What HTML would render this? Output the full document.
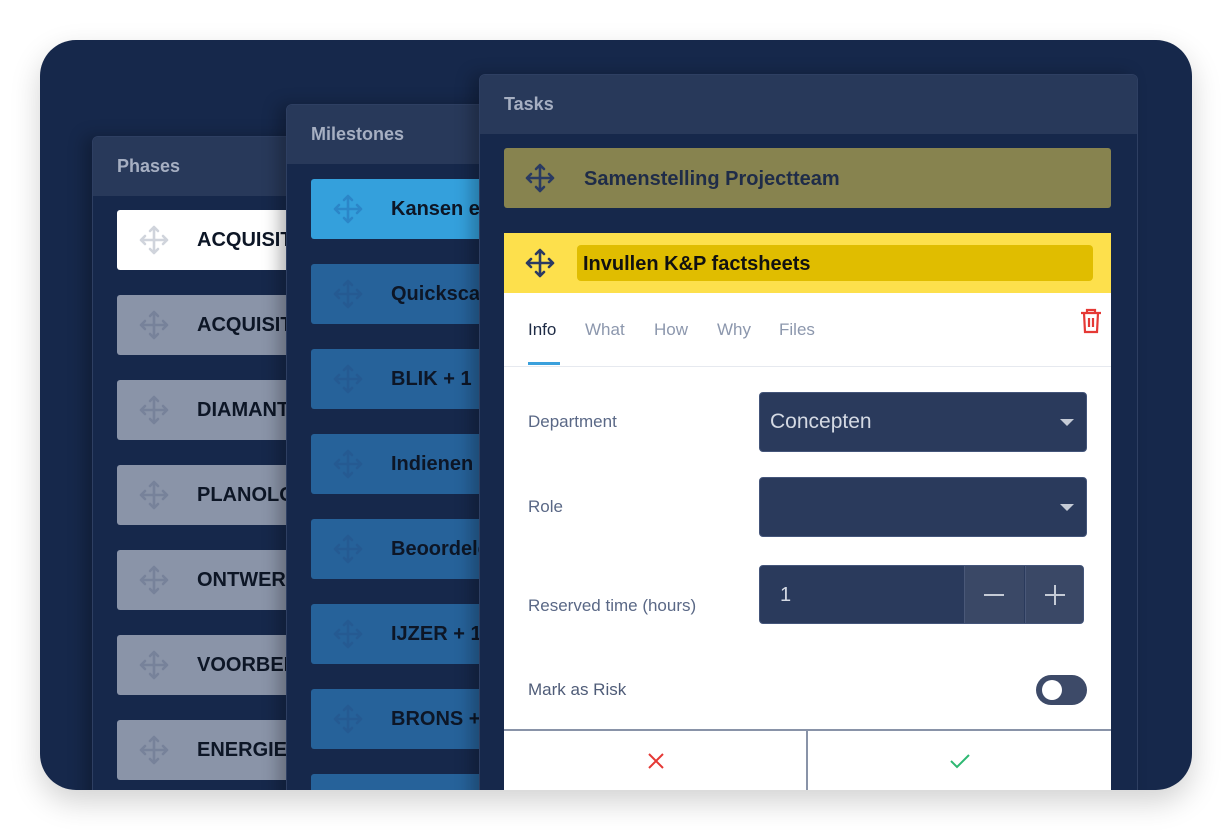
<!DOCTYPE html>
<html><head><meta charset="utf-8"><style>
*{margin:0;padding:0;box-sizing:border-box}
body{width:1232px;height:830px;background:#fff;position:relative;overflow:hidden;font-family:"Liberation Sans",Arial,sans-serif}
.frame{position:absolute;left:40px;top:40px;width:1152px;height:750px;background:#16284b;border-radius:36px;overflow:hidden;box-shadow:0 12px 30px rgba(0,0,0,.18)}
.panel{position:absolute;background:#16284b;border:1px solid #2e3f62;border-radius:6px 6px 0 0;overflow:hidden;box-shadow:-8px 0 16px rgba(0,0,0,.25)}
.ph{height:59px;background:#28395a;color:#a6afc2;font-size:18px;font-weight:bold;padding-left:24px;line-height:58px}
.it{position:absolute;height:60px;border-radius:3px;font-size:20px;font-weight:bold;color:#0d1626;line-height:60px;white-space:nowrap;overflow:hidden}
.it svg{position:absolute;left:22px;top:15px}
.it span{position:absolute;left:80px}
.lbl{position:absolute;left:528px;color:#5a6886;font-size:17px}
.sel{position:absolute;left:759px;width:328px;height:60px;background:#2a3a5c;border-radius:4px;border:1px solid #44557a}
.tri{position:absolute;right:12px;top:27px;border-left:7px solid transparent;border-right:7px solid transparent;border-top:7px solid #c5cbd6}
</style></head><body>
<svg width="0" height="0" style="position:absolute"><defs><symbol id="mv" viewBox="0 0 30 30"><g fill="none" stroke="currentColor" stroke-width="2.6" stroke-linecap="round" stroke-linejoin="round"><path d="M15 2V28M2 15H28M11 6L15 2L19 6M11 24L15 28L19 24M6 11L2 15L6 19M24 11L28 15L24 19"/></g></symbol></defs></svg>
<div class="frame">
 <div class="panel" style="left:52px;top:96px;width:260px;height:700px">
  <div class="ph">Phases</div>
 </div>
</div>
<div style="position:absolute;left:40px;top:40px;width:1152px;height:750px;border-radius:36px;overflow:hidden">
 <div style="position:absolute;left:77px;top:170px;width:200px;height:60px;background:linear-gradient(90deg,#fff 80%,#d8dbe2);" class="it"><svg width="30" height="30" style="color:#d0d4dc"><use href="#mv"/></svg><span>ACQUISITIE</span></div>
 <div class="it" style="left:77px;top:255px;width:200px;background:#8a94a8"><svg width="30" height="30" style="color:#77829a"><use href="#mv"/></svg><span>ACQUISITIE</span></div>
 <div class="it" style="left:77px;top:340px;width:200px;background:#8a94a8"><svg width="30" height="30" style="color:#77829a"><use href="#mv"/></svg><span>DIAMANT</span></div>
 <div class="it" style="left:77px;top:425px;width:200px;background:#8a94a8"><svg width="30" height="30" style="color:#77829a"><use href="#mv"/></svg><span>PLANOLOGIE</span></div>
 <div class="it" style="left:77px;top:510px;width:200px;background:#8a94a8"><svg width="30" height="30" style="color:#77829a"><use href="#mv"/></svg><span>ONTWERP</span></div>
 <div class="it" style="left:77px;top:595px;width:200px;background:#8a94a8"><svg width="30" height="30" style="color:#77829a"><use href="#mv"/></svg><span>VOORBEREIDING</span></div>
 <div class="it" style="left:77px;top:680px;width:200px;background:#8a94a8"><svg width="30" height="30" style="color:#77829a"><use href="#mv"/></svg><span>ENERGIE</span></div>

 <div class="panel" style="left:246px;top:64px;width:260px;height:720px">
  <div class="ph">Milestones</div>
  <div class="it" style="left:24px;top:74px;width:220px;background:#34a0dc"><svg width="30" height="30" style="color:#2b86c8"><use href="#mv"/></svg><span>Kansen en risico's</span></div>
  <div class="it" style="left:24px;top:159px;width:220px;background:#26629a"><svg width="30" height="30" style="color:#255a92"><use href="#mv"/></svg><span>Quickscan</span></div>
  <div class="it" style="left:24px;top:244px;width:220px;background:#26629a"><svg width="30" height="30" style="color:#255a92"><use href="#mv"/></svg><span>BLIK + 1</span></div>
  <div class="it" style="left:24px;top:329px;width:220px;background:#26629a"><svg width="30" height="30" style="color:#255a92"><use href="#mv"/></svg><span>Indienen</span></div>
  <div class="it" style="left:24px;top:414px;width:220px;background:#26629a"><svg width="30" height="30" style="color:#255a92"><use href="#mv"/></svg><span>Beoordelen</span></div>
  <div class="it" style="left:24px;top:499px;width:220px;background:#26629a"><svg width="30" height="30" style="color:#255a92"><use href="#mv"/></svg><span>IJZER + 1</span></div>
  <div class="it" style="left:24px;top:584px;width:220px;background:#26629a"><svg width="30" height="30" style="color:#255a92"><use href="#mv"/></svg><span>BRONS + 1</span></div>
  <div class="it" style="left:24px;top:669px;width:220px;background:#26629a"></div>
 </div>

 <div class="panel" style="left:439px;top:34px;width:659px;height:740px">
  <div class="ph">Tasks</div>
 </div>
</div>
<div style="position:absolute;left:0;top:0;width:1232px;height:790px;overflow:hidden">
 <div class="it" style="left:504px;top:148px;width:607px;background:#87834f;color:#1f2c48"><svg width="30" height="30" style="color:#2a3a62;left:21px"><use href="#mv"/></svg><span style="font-size:20px;top:1px">Samenstelling Projectteam</span></div>
 <div style="position:absolute;left:504px;top:233px;width:607px;height:560px;background:#fff;border-radius:3px 3px 0 0">
  <div style="height:60px;background:#fde04c;position:relative">
   <svg width="30" height="30" style="position:absolute;left:21px;top:15px;color:#2a3a62"><use href="#mv"/></svg>
   <div style="position:absolute;left:73px;top:12px;width:516px;height:36px;background:#e0bd00;border-radius:4px;font-size:20px;font-weight:bold;color:#111;line-height:38px;padding-left:6px">Invullen K&amp;P factsheets</div>
  </div>
 </div>
 <div style="position:absolute;left:528px;top:320px;font-size:17px;color:#1e2b45">Info</div>
 <div style="position:absolute;left:585px;top:320px;font-size:17px;color:#8c97ad">What</div>
 <div style="position:absolute;left:654px;top:320px;font-size:17px;color:#8c97ad">How</div>
 <div style="position:absolute;left:717px;top:320px;font-size:17px;color:#8c97ad">Why</div>
 <div style="position:absolute;left:779px;top:320px;font-size:17px;color:#8c97ad">Files</div>
 <div style="position:absolute;left:528px;top:362px;width:32px;height:3px;background:#3aa0dc"></div>
 <div style="position:absolute;left:504px;top:366px;width:607px;height:1px;background:#e6e9ef"></div>
 <svg width="22" height="26" viewBox="0 0 22 26" style="position:absolute;left:1080px;top:308px"><g fill="none" stroke="#e53935" stroke-width="2.2"><path d="M1 5H21M7 5V2H15V5M4 5L5 24H17L18 5M9 10V19M13 10V19"/></g></svg>
 <div class="lbl" style="top:412px">Department</div>
 <div class="sel" style="top:392px"><span style="position:absolute;left:10px;top:17px;color:#d4d9e3;font-size:21px">Concepten</span><div class="tri" style="top:26px"></div></div>
 <div class="lbl" style="top:497px">Role</div>
 <div class="sel" style="top:477px"><div class="tri" style="top:26px"></div></div>
 <div class="lbl" style="top:596px">Reserved time (hours)</div>
 <div style="position:absolute;left:759px;top:565px;width:325px;height:59px;background:#2a3a5c;border-radius:4px;overflow:hidden;border:1px solid #44557a">
  <span style="position:absolute;left:20px;top:18px;color:#d4d9e3;font-size:20px">1</span>
  <div style="position:absolute;left:204px;top:0;width:60px;height:59px;background:#3a4866;border-left:1px solid #4a5878"></div>
  <div style="position:absolute;left:265px;top:0;width:60px;height:59px;background:#3a4866;border-left:1px solid #4a5878"></div>
  <div style="position:absolute;left:224px;top:28px;width:20px;height:2px;background:#c5cbd6"></div>
  <div style="position:absolute;left:285px;top:28px;width:20px;height:2px;background:#c5cbd6"></div>
  <div style="position:absolute;left:294px;top:19px;width:2px;height:20px;background:#c5cbd6"></div>
 </div>
 <div class="lbl" style="top:680px;color:#4f5c78">Mark as Risk</div>
 <div style="position:absolute;left:1036px;top:675px;width:51px;height:30px;background:#3d4a68;border-radius:15px"><div style="position:absolute;left:6px;top:5px;width:20px;height:20px;border-radius:50%;background:#fff"></div></div>
 <div style="position:absolute;left:504px;top:729px;width:607px;height:2px;background:#8993a8"></div>
 <div style="position:absolute;left:806px;top:731px;width:2px;height:60px;background:#8993a8"></div>
 <svg width="16" height="16" viewBox="0 0 16 16" style="position:absolute;left:648px;top:753px"><path d="M1 1L15 15M15 1L1 15" stroke="#e53935" stroke-width="2"/></svg>
 <svg width="20" height="16" viewBox="0 0 20 16" style="position:absolute;left:950px;top:753px"><path d="M1 8L7 14L19 2" fill="none" stroke="#2eb872" stroke-width="2"/></svg>
</div>
</body></html>
